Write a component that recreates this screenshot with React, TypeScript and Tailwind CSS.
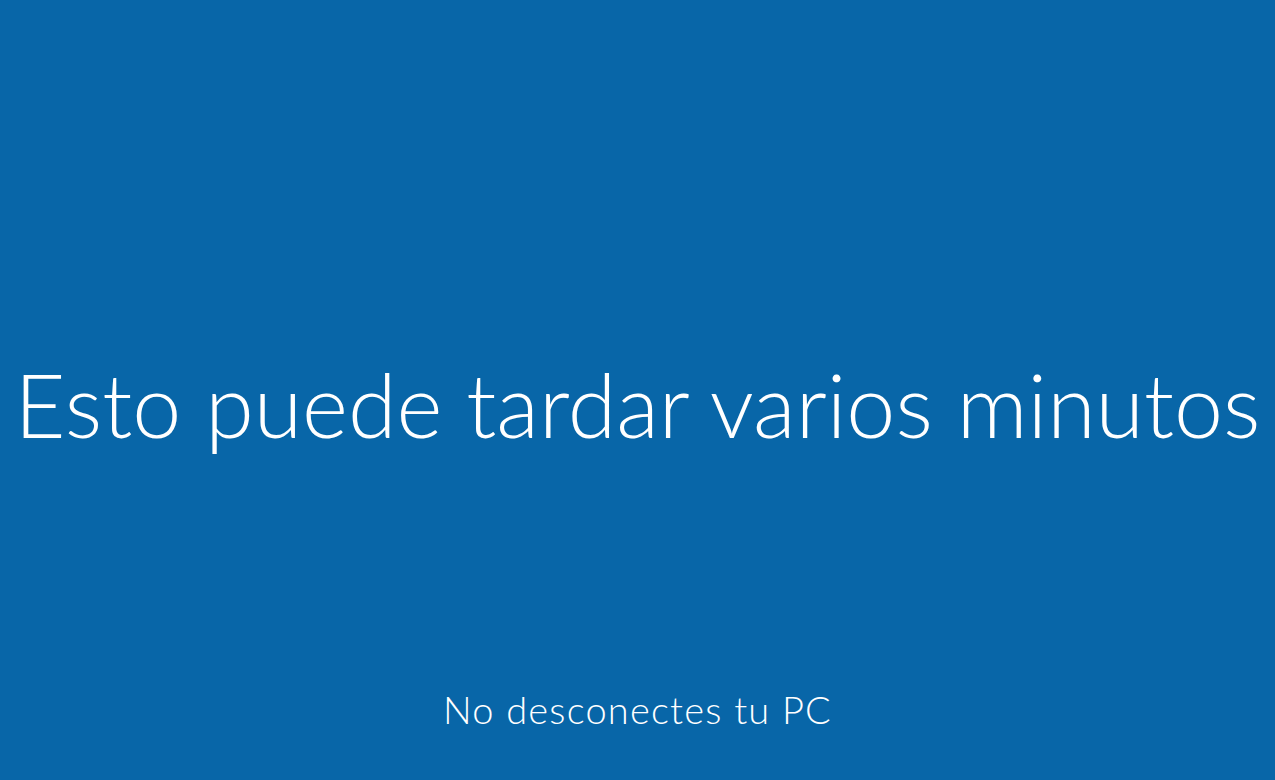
export default function App() {
  return (
    <div className="w-[1275px] h-[780px] bg-[#0866a8] flex flex-col items-center text-white overflow-hidden" style={{ fontFamily: 'Lato, "Open Sans", sans-serif' }}>
      <div className="h-[349px] shrink-0" />
      <div className="text-[88px] font-light leading-[110px] whitespace-nowrap">Esto puede tardar varios minutos</div>
      <div className="flex-1" />
      <div className="text-[38px] font-light leading-[40px] tracking-[1.2px] whitespace-nowrap mb-[51px]">No desconectes tu PC</div>
    </div>
  );
}
